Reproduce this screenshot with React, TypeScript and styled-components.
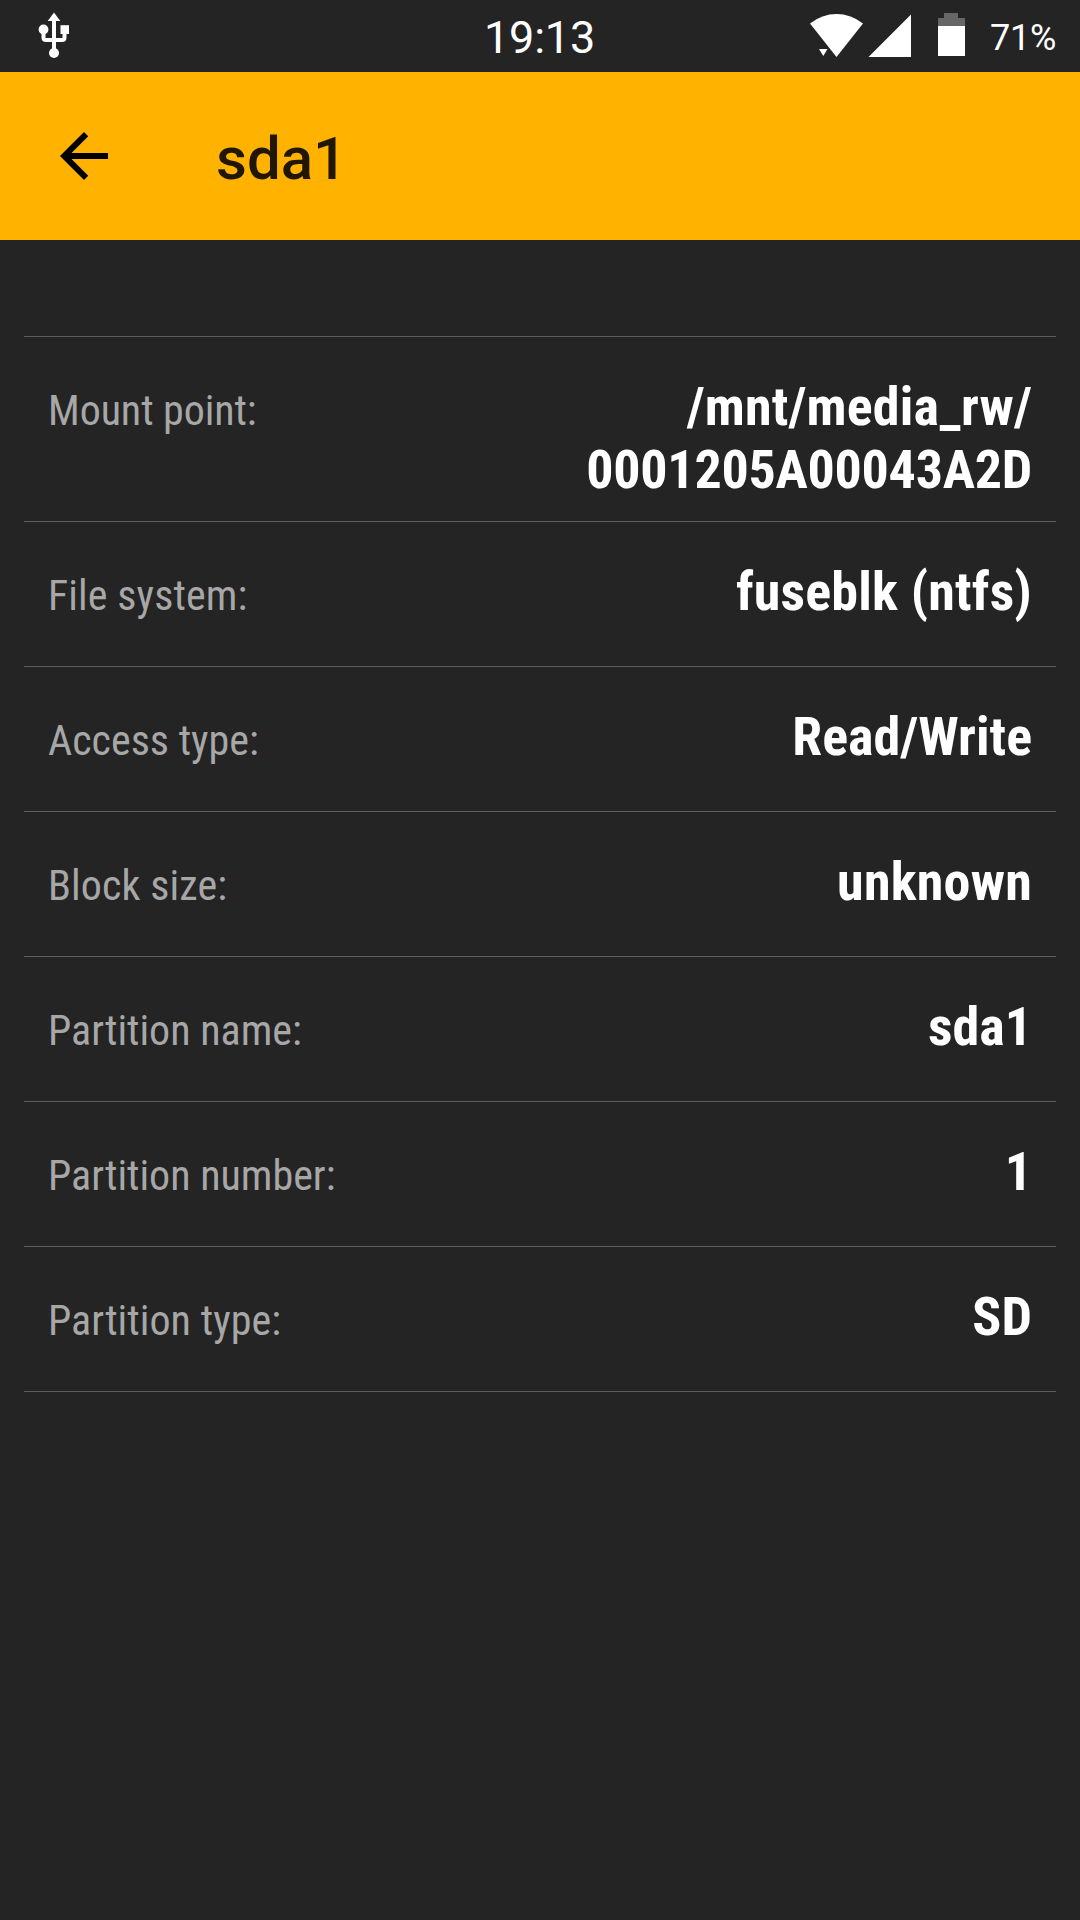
import React from "react";
import styled, { createGlobalStyle } from "styled-components";

const GlobalStyle = createGlobalStyle`
  html, body { margin: 0; padding: 0; background: #242424; }
  * { box-sizing: border-box; }
`;

const Screen = styled.div`
  display: flex;
  flex-direction: column;
  width: 1080px;
  height: 1920px;
  overflow: hidden;
  background: #242424;
  color: #fff;
  font-family: Roboto, "Liberation Sans", sans-serif;
`;

const StatusBar = styled.header`
  display: grid;
  grid-template-columns: 1fr auto 1fr;
  height: 72px;
  flex: none;
`;

const Notifications = styled.div`
  padding: 12px 0 0 38px;
`;

const Clock = styled.time`
  font-size: 45px;
  line-height: 53px;
  padding: 11px 1px 0 0;
  letter-spacing: -0.2px;
`;

const SystemIcons = styled.div`
  display: flex;
  justify-content: flex-end;
  padding-right: 24px;
`;

const Glyph = styled.svg`
  display: block;
  flex: none;
`;

const Battery = styled.span`
  width: 66px;
  font-size: 36px;
  line-height: 42px;
  padding-top: 17px;
  margin-left: 24px;
  letter-spacing: -0.2px;
`;

const AppBar = styled.nav`
  display: flex;
  align-items: center;
  height: 168px;
  flex: none;
  padding-left: 48px;
  background: #ffb300;
`;

const BackButton = styled.button`
  display: flex;
  width: 168px;
  height: 72px;
  padding: 0;
  border: 0;
  background: none;
`;

const Title = styled.h1`
  margin: 6px 0 0;
  font-size: 60px;
  line-height: 70px;
  font-weight: 500;
  color: rgba(0, 0, 0, 0.87);
`;

const Details = styled.dl`
  margin: 96px 24px 0;
  border-top: 1px solid #5e5e5e;
`;

const Row = styled.div`
  display: flex;
  justify-content: space-between;
  align-items: baseline;
  min-height: 145px;
  padding: 38px 24px 20px;
  border-bottom: 1px solid #5e5e5e;
  font-family: "Roboto Condensed", Roboto, "Liberation Sans", sans-serif;
  font-stretch: 75%;
`;

const Label = styled.dt<{ $tracking?: number }>`
  font-size: 42px;
  line-height: 49px;
  letter-spacing: ${({ $tracking = 0 }) => $tracking}px;
  color: #a7a7a7;
  white-space: nowrap;
`;

const Value = styled.dd`
  display: flex;
  flex-direction: column;
  align-items: flex-end;
  margin: 0;
  font-size: 54px;
  line-height: 63px;
  font-weight: 700;
  white-space: nowrap;
`;

const ValueLine = styled.span<{ $tracking?: number }>`
  letter-spacing: ${({ $tracking = 0 }) => $tracking}px;
`;

interface Line {
  text: string;
  tracking?: number;
}

const partition: { label: string; tracking?: number; lines: Line[] }[] = [
  {
    label: "Mount point:",
    tracking: -0.08,
    lines: [
      { text: "/mnt/media_rw/", tracking: 0.18 },
      { text: "0001205A00043A2D", tracking: -0.25 },
    ],
  },
  { label: "File system:", tracking: 0.1, lines: [{ text: "fuseblk (ntfs)", tracking: 0.18 }] },
  { label: "Access type:", lines: [{ text: "Read/Write" }] },
  { label: "Block size:", tracking: 0.1, lines: [{ text: "unknown", tracking: 0.25 }] },
  { label: "Partition name:", lines: [{ text: "sda1" }] },
  { label: "Partition number:", lines: [{ text: "1" }] },
  { label: "Partition type:", tracking: 0.05, lines: [{ text: "SD" }] },
];

function UsbIcon() {
  return (
    <Glyph width="32" height="47" viewBox="0 0 32 47">
      <path d="M5.5 20v5.500q0 2.500 2.500 2.500h16q2.500 0 2.500-2.500V20M16 7v33" fill="none" stroke="#fff" strokeWidth="4" />
      <path d="M16 .5 22.300 9H9.700Z" fill="#fff" />
      <circle cx="5.500" cy="17.500" r="4.900" fill="#fff" />
      <path d="M22.500 13.200H31V22h-8.500Z" fill="#fff" />
      <circle cx="16" cy="41" r="5" fill="#fff" />
    </Glyph>
  );
}

function SignalIcons() {
  return (
    <Glyph width="156" height="72" viewBox="0 0 156 72" fill="#fff">
      <path d="M0 23.500Q12 14 26.500 14T53 23.500L26.500 57Z" />
      <path d="M9 49h8.500l-4.200 7Z" />
      <path d="M58.500 57 101 14.500V57Z" />
      <path d="M134 13h14v5h7v8h-27v-8h6Z" fill="#666" />
      <path d="M128 26h27v30h-27Z" />
    </Glyph>
  );
}

export default function App() {
  return (
    <Screen>
      <GlobalStyle />
      <StatusBar>
        <Notifications>
          <UsbIcon />
        </Notifications>
        <Clock>19:13</Clock>
        <SystemIcons>
          <SignalIcons />
          <Battery>71%</Battery>
        </SystemIcons>
      </StatusBar>
      <AppBar>
        <BackButton aria-label="Back">
          <Glyph width="72" height="72" viewBox="0 0 24 24">
            <path d="M20 11H7.830l5.590-5.590L12 4l-8 8 8 8 1.410-1.410L7.830 13H20v-2z" />
          </Glyph>
        </BackButton>
        <Title>sda1</Title>
      </AppBar>
      <Details>
        {partition.map((item) => (
          <Row key={item.label}>
            <Label $tracking={item.tracking}>{item.label}</Label>
            <Value>
              {item.lines.map((line) => (
                <ValueLine key={line.text} $tracking={line.tracking}>
                  {line.text}
                </ValueLine>
              ))}
            </Value>
          </Row>
        ))}
      </Details>
    </Screen>
  );
}
